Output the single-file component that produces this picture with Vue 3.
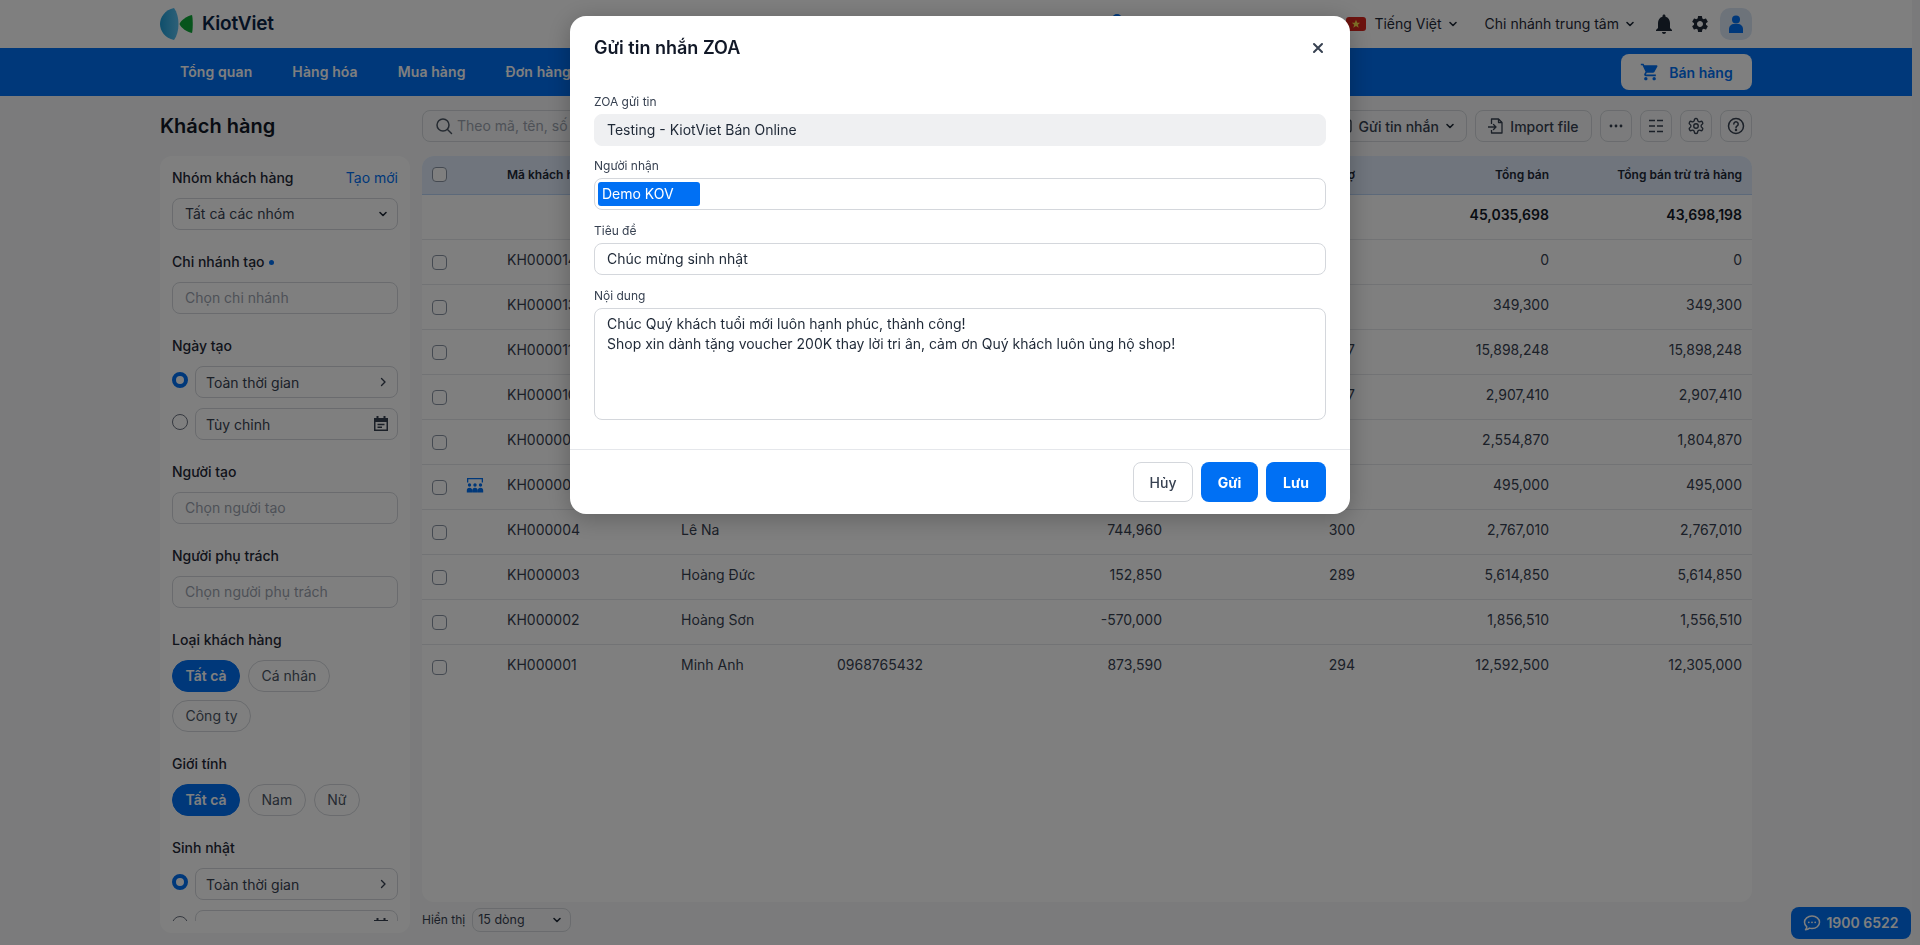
<script setup>
const navItems = ['Tổng quan', 'Hàng hóa', 'Mua hàng', 'Đơn hàng', 'Khách hàng', 'Sổ quỹ', 'Báo cáo', 'Bán online']

const rows = [
  { code: 'KH000014', name: '', phone: '', debt: '', points: '', sales: '0', net: '0' },
  { code: 'KH000013', name: '', phone: '', debt: '', points: '', sales: '349,300', net: '349,300' },
  { code: 'KH000011', name: '', phone: '', debt: '', points: '327', sales: '15,898,248', net: '15,898,248' },
  { code: 'KH000010', name: '', phone: '', debt: '', points: '297', sales: '2,907,410', net: '2,907,410' },
  { code: 'KH000009', name: '', phone: '', debt: '', points: '', sales: '2,554,870', net: '1,804,870' },
  { code: 'KH000005', name: '', phone: '', debt: '', points: '', sales: '495,000', net: '495,000', group: true },
  { code: 'KH000004', name: 'Lê Na', phone: '', debt: '744,960', points: '300', sales: '2,767,010', net: '2,767,010' },
  { code: 'KH000003', name: 'Hoàng Đức', phone: '', debt: '152,850', points: '289', sales: '5,614,850', net: '5,614,850' },
  { code: 'KH000002', name: 'Hoàng Sơn', phone: '', debt: '-570,000', points: '', sales: '1,856,510', net: '1,556,510' },
  { code: 'KH000001', name: 'Minh Anh', phone: '0968765432', debt: '873,590', points: '294', sales: '12,592,500', net: '12,305,000' }
]
</script>

<template>
  <div class="page">
    <header class="topbar">
      <div class="wrap topbar-in">
        <div class="logo">
          <svg width="33" height="32" viewBox="0 0 33 32">
            <defs>
              <linearGradient id="lg" x1="0" y1="0" x2="1" y2="0">
                <stop offset="0" stop-color="#1f9ed8" />
                <stop offset="1" stop-color="#5cc1f0" />
              </linearGradient>
            </defs>
            <path d="M14 0C5 2 0 9 0 16s5 14 14 16c3-4 4.500-10 4.500-16S17 4 14 0z" fill="url(#lg)" />
            <path d="M32 7c-5 1-11 5-12.500 9C21 20 27 24 32 25c1-3 1-15 0-18z" fill="#0fa838" />
          </svg>
          <span class="logo-text">KiotViet</span>
        </div>
        <i class="top-dot"></i>
        <div class="top-right">
          <span class="flag"><svg width="10" height="10" viewBox="0 0 24 24"><path d="M12 2l3 7h7l-5.600 4.500L18.500 21 12 16.500 5.500 21l2.100-7.500L2 9h7z" fill="#ffe14d" /></svg></span>
          <span class="top-link lang">Tiếng Việt <svg class="chev" viewBox="0 0 12 12"><path d="M3 4.500l3 3 3-3" /></svg></span>
          <span class="top-link branch">Chi nhánh trung tâm <svg class="chev" viewBox="0 0 12 12"><path d="M3 4.500l3 3 3-3" /></svg></span>
          <svg class="bell" width="24" height="24" viewBox="0 0 24 24"><path d="M12 22c1.100 0 2-.9 2-2h-4c0 1.100.9 2 2 2zm6-6v-5c0-3.070-1.630-5.640-4.500-6.320V4c0-.83-.67-1.500-1.500-1.500s-1.500.67-1.500 1.500v.68C7.640 5.360 6 7.920 6 11v5l-2 2v1h16v-1l-2-2z" /></svg>
          <svg class="gear" width="20" height="20" viewBox="0 0 24 24"><path d="M19.140 12.940c.04-.3.06-.61.06-.94 0-.32-.02-.64-.07-.94l2.030-1.580a.49.49 0 0 0 .12-.61l-1.920-3.320a.488.488 0 0 0-.59-.22l-2.390.96c-.5-.38-1.030-.7-1.620-.94l-.36-2.540a.484.484 0 0 0-.48-.41h-3.840c-.24 0-.43.17-.47.41l-.36 2.540c-.59.24-1.130.57-1.620.94l-2.390-.96c-.22-.08-.47 0-.59.22L2.740 8.870c-.12.21-.08.47.12.61l2.030 1.580c-.05.3-.09.63-.09.94s.02.64.07.94l-2.030 1.580a.49.49 0 0 0-.12.61l1.920 3.320c.12.22.37.29.59.22l2.390-.96c.5.38 1.030.7 1.620.94l.36 2.540c.05.24.24.41.48.41h3.840c.24 0 .44-.17.47-.41l.36-2.540c.59-.24 1.130-.56 1.620-.94l2.390.96c.22.08.47 0 .59-.22l1.920-3.320c.12-.22.07-.47-.12-.61l-2.010-1.580zM12 15.600c-1.980 0-3.600-1.620-3.600-3.600s1.620-3.600 3.600-3.600 3.600 1.620 3.600 3.600-1.620 3.600-3.600 3.600z" /></svg>
          <span class="avatar"><svg width="20" height="20" viewBox="0 0 20 20"><circle cx="10" cy="5.500" r="4" /><path d="M3 19v-4c0-3 2.500-5 5-5h4c2.500 0 5 2 5 5v4z" /></svg></span>
        </div>
      </div>
    </header>

    <nav class="navbar">
      <div class="wrap nav-in">
        <a v-for="item in navItems" :key="item" class="nav-item">{{ item }}</a>
        <button class="sell-btn">
          <svg width="20" height="20" viewBox="0 0 24 24"><path d="M7 18c-1.100 0-1.990.9-1.990 2S5.900 22 7 22s2-.9 2-2-.9-2-2-2zM1 2v2h2l3.600 7.590-1.350 2.450c-.16.28-.25.61-.25.96 0 1.100.9 2 2 2h12v-2H7.420c-.14 0-.25-.11-.25-.25l.03-.12.9-1.630h7.450c.75 0 1.410-.41 1.750-1.030l3.580-6.490c.08-.14.12-.31.12-.48 0-.55-.45-1-1-1H5.210l-.94-2H1zm16 16c-1.100 0-1.990.9-1.990 2s.89 2 1.990 2 2-.9 2-2-.9-2-2-2z" /></svg>
          Bán hàng
        </button>
      </div>
    </nav>

    <main class="wrap content">
      <h1 class="title">Khách hàng</h1>

      <div class="toolbar">
        <div class="search">
          <svg width="18" height="18" viewBox="0 0 18 18" fill="none" stroke="#4b5563" stroke-width="1.500"><circle cx="8" cy="8" r="6" /><path d="M12.500 12.500L16.500 16.500" stroke-linecap="round" /></svg>
          <span>Theo mã, tên, số</span>
        </div>
        <button class="tool-btn send">
          <svg width="16" height="16" viewBox="0 0 16 16" fill="none" stroke="#374151" stroke-width="1.300"><rect x="2" y="2" width="12" height="12" rx="2" /></svg>
          Gửi tin nhắn
          <svg class="chev" viewBox="0 0 12 12"><path d="M3 4.500l3 3 3-3" /></svg>
        </button>
        <button class="tool-btn">
          <svg width="16" height="18" viewBox="1 0 16 18" fill="none" stroke="#374151" stroke-width="1.300" stroke-linejoin="round"><path d="M4.500 7V2h7l3.500 3.500V16H4.500v-3" /><path d="M11.500 2v3.500H15" /><path d="M1 10h8M6.500 7.500L9 10l-2.500 2.500" stroke-linecap="round" /></svg>
          Import file
        </button>
        <button class="icon-btn">
          <svg width="16" height="16" viewBox="0 0 16 16" fill="#374151"><circle cx="3" cy="8" r="1.400" /><circle cx="8" cy="8" r="1.400" /><circle cx="13" cy="8" r="1.400" /></svg>
        </button>
        <button class="icon-btn">
          <svg width="16" height="16" viewBox="0 0 16 16" fill="none" stroke="#374151" stroke-width="1.500"><path d="M1 2.500h6M9 2.500h6M1 8h6M9 8h6M1 13.500h6M9 13.500h6" /></svg>
        </button>
        <button class="icon-btn">
          <svg width="18" height="18" viewBox="0 0 24 24" fill="none" stroke="#374151" stroke-width="1.800" stroke-linejoin="round"><path d="M12.220 2h-.44a2 2 0 0 0-2 2v.18a2 2 0 0 1-1 1.730l-.43.25a2 2 0 0 1-2 0l-.15-.08a2 2 0 0 0-2.730.73l-.22.38a2 2 0 0 0 .73 2.730l.15.1a2 2 0 0 1 1 1.720v.51a2 2 0 0 1-1 1.740l-.15.09a2 2 0 0 0-.73 2.730l.22.38a2 2 0 0 0 2.730.73l.15-.08a2 2 0 0 1 2 0l.43.25a2 2 0 0 1 1 1.730V20a2 2 0 0 0 2 2h.44a2 2 0 0 0 2-2v-.18a2 2 0 0 1 1-1.730l.43-.25a2 2 0 0 1 2 0l.15.08a2 2 0 0 0 2.730-.73l.22-.39a2 2 0 0 0-.73-2.730l-.15-.08a2 2 0 0 1-1-1.740v-.5a2 2 0 0 1 1-1.740l.15-.09a2 2 0 0 0 .73-2.730l-.22-.38a2 2 0 0 0-2.730-.73l-.15.08a2 2 0 0 1-2 0l-.43-.25a2 2 0 0 1-1-1.730V4a2 2 0 0 0-2-2z" /><circle cx="12" cy="12" r="3" /></svg>
        </button>
        <button class="icon-btn">
          <svg width="18" height="18" viewBox="0 0 18 18" fill="none" stroke="#374151" stroke-width="1.500"><circle cx="9" cy="9" r="7.500" /><path d="M6.800 7a2.200 2.200 0 1 1 3.400 1.900c-.8.5-1.200 1-1.200 1.900" stroke-linecap="round" /><circle cx="9" cy="13" r=".5" fill="#374151" /></svg>
        </button>
      </div>

      <aside class="side">
        <div class="side-scroll">
          <section class="group">
            <div class="label-row"><span class="label">Nhóm khách hàng</span><a class="new-link">Tạo mới</a></div>
            <div class="control select">Tất cả các nhóm <svg class="chev" viewBox="0 0 12 12"><path d="M3 4.500l3 3 3-3" /></svg></div>
          </section>
          <section class="group">
            <div class="label">Chi nhánh tạo<i class="dot"></i></div>
            <div class="control ph">Chọn chi nhánh</div>
          </section>
          <section class="group">
            <div class="label">Ngày tạo</div>
            <div class="radio-row">
              <i class="radio on"></i>
              <div class="control small">Toàn thời gian <svg class="arrow" viewBox="0 0 12 12"><path d="M4.500 2.500L8 6l-3.500 3.500" /></svg></div>
            </div>
            <div class="radio-row">
              <i class="radio"></i>
              <div class="control small">Tùy chỉnh <svg class="cal" width="16" height="16" viewBox="0 0 16 16"><path d="M3.500 0h2v2h5V0h2v2H15v4H1V2h2.500z" fill="#374151" /><path d="M1.750 5v9.250h12.500V5M4.500 8.500h7M4.500 11.200h4.500" fill="none" stroke="#374151" stroke-width="1.500" /></svg></div>
            </div>
          </section>
          <section class="group">
            <div class="label">Người tạo</div>
            <div class="control ph">Chọn người tạo</div>
          </section>
          <section class="group">
            <div class="label">Người phụ trách</div>
            <div class="control ph">Chọn người phụ trách</div>
          </section>
          <section class="group">
            <div class="label">Loại khách hàng</div>
            <div class="pills">
              <span class="pill active">Tất cả</span>
              <span class="pill">Cá nhân</span>
              <span class="pill">Công ty</span>
            </div>
          </section>
          <section class="group">
            <div class="label">Giới tính</div>
            <div class="pills">
              <span class="pill active">Tất cả</span>
              <span class="pill">Nam</span>
              <span class="pill">Nữ</span>
            </div>
          </section>
          <section class="group">
            <div class="label">Sinh nhật</div>
            <div class="radio-row">
              <i class="radio on"></i>
              <div class="control small">Toàn thời gian <svg class="arrow" viewBox="0 0 12 12"><path d="M4.500 2.500L8 6l-3.500 3.500" /></svg></div>
            </div>
            <div class="radio-row">
              <i class="radio"></i>
              <div class="control small">Tùy chỉnh <svg class="cal" width="16" height="16" viewBox="0 0 16 16"><path d="M3.500 0h2v2h5V0h2v2H15v4H1V2h2.500z" fill="#374151" /><path d="M1.750 5v9.250h12.500V5M4.500 8.500h7M4.500 11.200h4.500" fill="none" stroke="#374151" stroke-width="1.500" /></svg></div>
            </div>
          </section>
        </div>
      </aside>

      <div class="table-col">
        <div class="table">
          <div class="row head">
            <i class="check"></i>
            <span></span>
            <span>Mã khách hàng</span>
            <span>Tên khách hàng</span>
            <span>Điện thoại</span>
            <span class="num">Nợ hiện tại</span>
            <span class="num">Tổng nợ</span>
            <span class="num">Tổng bán</span>
            <span class="num">Tổng bán trừ trả hàng</span>
          </div>
          <div class="row total">
            <span></span><span></span><span></span><span></span><span></span><span></span><span></span>
            <span class="num">45,035,698</span>
            <span class="num">43,698,198</span>
          </div>
          <div v-for="r in rows" :key="r.code" class="row">
            <i class="check"></i>
            <span class="cell-icon">
              <svg v-if="r.group" width="18" height="15" viewBox="0 0 18 15" fill="#0070f4"><path d="M1 0h16v4.500h-1.300V1.300H2.300v3.200H1z" /><circle cx="3.500" cy="7" r="1.700" /><circle cx="9" cy="7" r="1.700" /><circle cx="14.500" cy="7" r="1.700" /><path d="M.8 14.500v-2c0-1.600 1-2.700 2.700-2.700s2.700 1.100 2.700 2.700v2zM6.300 14.500v-2c0-1.600 1-2.700 2.700-2.700s2.700 1.100 2.700 2.700v2zM11.800 14.500v-2c0-1.600 1-2.700 2.700-2.700s2.700 1.100 2.700 2.700v2z" /></svg>
            </span>
            <span>{{ r.code }}</span>
            <span>{{ r.name }}</span>
            <span>{{ r.phone }}</span>
            <span class="num">{{ r.debt }}</span>
            <span class="num">{{ r.points }}</span>
            <span class="num">{{ r.sales }}</span>
            <span class="num">{{ r.net }}</span>
          </div>
        </div>
        <div class="pager">
          <span>Hiển thị</span>
          <div class="pager-select">15 dòng <svg class="chev" viewBox="0 0 12 12"><path d="M3 4.500l3 3 3-3" /></svg></div>
        </div>
      </div>
    </main>

    <a class="hotline">
      <svg width="18" height="18" viewBox="0 0 18 18" fill="none" stroke="#fff" stroke-width="1.500"><path d="M9 2c4.200 0 7.500 2.700 7.500 6.300S13.200 14.500 9 14.500c-.9 0-1.700-.1-2.500-.4-1 .9-2.400 1.600-4 1.700.8-.8 1.200-1.800 1.300-2.900C2.400 11.800 1.500 10.200 1.500 8.300 1.500 4.700 4.800 2 9 2z" stroke-linejoin="round" /><circle cx="5.800" cy="8.300" r=".9" fill="#fff" stroke="none" /><circle cx="9" cy="8.300" r=".9" fill="#fff" stroke="none" /><circle cx="12.200" cy="8.300" r=".9" fill="#fff" stroke="none" /></svg>
      1900 6522
    </a>

    <div class="overlay">
      <div class="modal">
        <div class="modal-head">
          <h2>Gửi tin nhắn ZOA</h2>
          <svg width="12" height="12" viewBox="0 0 12 12" fill="none" stroke="#374151" stroke-width="2" stroke-linecap="round"><path d="M2 2l8 8M10 2l-8 8" /></svg>
        </div>
        <div class="modal-body">
          <div class="field">
            <label>ZOA gửi tin</label>
            <div class="box readonly">Testing - KiotViet Bán Online</div>
          </div>
          <div class="field">
            <label>Người nhận</label>
            <div class="box tags"><span class="tag">Demo KOV</span></div>
          </div>
          <div class="field">
            <label>Tiêu đề</label>
            <div class="box">Chúc mừng sinh nhật</div>
          </div>
          <div class="field">
            <label>Nội dung</label>
            <div class="box area">Chúc Quý khách tuổi mới luôn hạnh phúc, thành công!<br />Shop xin dành tặng voucher 200K thay lời tri ân, cảm ơn Quý khách luôn ủng hộ shop!</div>
          </div>
        </div>
        <div class="modal-foot">
          <button class="btn cancel">Hủy</button>
          <button class="btn primary send-btn">Gửi</button>
          <button class="btn primary">Lưu</button>
        </div>
      </div>
    </div>
  </div>
</template>

<style scoped>
.page {
  position: relative;
  width: 1912px;
  height: 945px;
  overflow: hidden;
  background: #f6f7f8;
  font-family: Inter, "Noto Sans", sans-serif;
  font-size: 14px;
  line-height: 20px;
  color: #1f2937;
}

.wrap {
  width: 1592px;
  margin: 0 auto;
}

button {
  font-family: inherit;
}

/* top bar */
.topbar {
  height: 48px;
  background: #fff;
}
.topbar-in {
  position: relative;
  height: 48px;
  display: flex;
  align-items: center;
  justify-content: space-between;
}
.logo {
  display: flex;
  align-items: center;
  gap: 9px;
}
.logo-text {
  font-size: 19px;
  font-weight: 600;
  color: #0b2447;
  letter-spacing: -0.2px;
}
.top-dot {
  position: absolute;
  left: 952px;
  top: 14px;
  width: 10px;
  height: 10px;
  border-radius: 50%;
  background: #0070f4;
}
.top-right {
  display: flex;
  align-items: center;
}
.flag {
  width: 20px;
  height: 14px;
  border-radius: 3px;
  background: #da251d;
  display: flex;
  align-items: center;
  justify-content: center;
  margin-right: 8px;
}
.top-link {
  display: flex;
  align-items: center;
  gap: 5px;
  color: #1f2937;
}
.lang {
  margin-right: 26px;
}
.branch {
  margin-right: 16px;
}
.chev {
  width: 12px;
  height: 12px;
  fill: none;
  stroke: #1f2937;
  stroke-width: 1.600;
  stroke-linecap: round;
  stroke-linejoin: round;
  flex: none;
}
.bell {
  fill: #1f2937;
  margin-right: 14px;
}
.gear {
  fill: #1f2937;
  margin-right: 10px;
}
.avatar {
  width: 32px;
  height: 32px;
  border-radius: 10px;
  background: #dbe6f5;
  display: flex;
  align-items: center;
  justify-content: center;
  fill: #0070f4;
}

/* nav */
.navbar {
  height: 48px;
  background: #0070f4;
}
.nav-in {
  height: 48px;
  display: flex;
  align-items: center;
}
.nav-item {
  padding: 0 20px;
  color: #fff;
  font-weight: 600;
  letter-spacing: 0.1px;
  white-space: nowrap;
}
.sell-btn {
  margin-left: auto;
  width: 131px;
  height: 36px;
  border: 0;
  border-radius: 8px;
  background: #fff;
  color: #0070f4;
  font-size: 14px;
  font-weight: 600;
  display: flex;
  align-items: center;
  justify-content: center;
  gap: 9px;
  fill: #0070f4;
}

/* main grid */
.content {
  display: grid;
  grid-template-columns: 250px 1fr;
  grid-template-rows: 32px 777px;
  column-gap: 12px;
  row-gap: 14px;
  padding-top: 14px;
}
.title {
  margin: 0;
  font-size: 20px;
  line-height: 32px;
  font-weight: 600;
  color: #111827;
}
.toolbar {
  display: flex;
  gap: 8px;
  height: 32px;
}
.search {
  flex: 1;
  display: flex;
  align-items: center;
  gap: 4px;
  padding-left: 12px;
  border: 1px solid #d4d7dc;
  border-radius: 8px;
  color: #9ca3af;
}
.tool-btn {
  height: 32px;
  padding: 0 12.500px;
  border: 1px solid #d4d7dc;
  border-radius: 8px;
  background: transparent;
  display: flex;
  align-items: center;
  gap: 6px;
  font-size: 14px;
  font-weight: 500;
  color: #374151;
}
.tool-btn.send {
  padding-right: 10px;
}
.tool-btn.send .chev {
  margin-left: -1px;
}
.icon-btn {
  width: 32px;
  height: 32px;
  padding: 0;
  border: 1px solid #d4d7dc;
  border-radius: 8px;
  background: transparent;
  display: flex;
  align-items: center;
  justify-content: center;
}

/* sidebar */
.side {
  background: #fff;
  border-radius: 12px;
  padding: 12px;
}
.side-scroll {
  height: 753px;
  overflow: hidden;
}
.group {
  margin-bottom: 22px;
}
.label-row {
  display: flex;
  justify-content: space-between;
  margin-bottom: 10px;
}
.label {
  font-weight: 500;
  color: #1f2937;
  display: block;
}
.group > .label {
  margin-bottom: 10px;
}
.new-link {
  color: #0070f4;
}
.dot {
  display: inline-block;
  width: 5px;
  height: 5px;
  border-radius: 50%;
  background: #0070f4;
  margin-left: 4px;
  vertical-align: 2px;
}
.control {
  height: 32px;
  box-sizing: border-box;
  border: 1px solid #d4d7dc;
  border-radius: 8px;
  padding: 0 12px;
  display: flex;
  align-items: center;
  justify-content: space-between;
  color: #374151;
}
.control.select {
  padding-right: 8px;
}
.control.ph {
  color: #9ca3af;
}
.control.small {
  flex: 1;
  padding: 2px 8px 0 10px;
}
.radio-row {
  display: flex;
  gap: 7px;
  margin-bottom: 10px;
}
.radio {
  width: 16px;
  height: 16px;
  box-sizing: border-box;
  margin-top: 6px;
  border: 1px solid #6b7280;
  border-radius: 50%;
  flex: none;
}
.radio.on {
  border: 4px solid #0070f4;
  background: #fff;
}
.arrow {
  width: 12px;
  height: 12px;
  margin-top: -2px;
  fill: none;
  stroke: #374151;
  stroke-width: 1.400;
  stroke-linecap: round;
  stroke-linejoin: round;
}
.cal {
  margin-top: -2px;
}
.pills {
  display: flex;
  flex-wrap: wrap;
  gap: 8px;
}
.pill {
  height: 32px;
  box-sizing: border-box;
  padding: 0 12.500px;
  border: 1px solid #d4d7dc;
  border-radius: 16px;
  display: flex;
  align-items: center;
  color: #4b5563;
}
.pill.active {
  background: #0070f4;
  border-color: #0070f4;
  color: #fff;
  font-weight: 600;
}

/* table */
.table {
  height: 746px;
  background: #fff;
  border-radius: 12px;
  overflow: hidden;
}
.row {
  display: grid;
  grid-template-columns: 44px 41px 174px 156px 200px 125px 193px 194px 193px;
  box-sizing: border-box;
  height: 45px;
  padding: 10px 10px 0 0;
  border-bottom: 1px solid #e5e7eb;
  color: #374151;
}
.row:last-child {
  border-bottom: 0;
}
.row.head {
  height: 39px;
  padding-top: 9px;
  background: #e0ebfb;
  border-bottom: 1px solid #b9d3f5;
  font-size: 12px;
  font-weight: 600;
  color: #1f2937;
}
.row.total {
  font-weight: 600;
  color: #111827;
}
.num {
  text-align: right;
  white-space: nowrap;
}
.check {
  display: block;
  width: 15px;
  height: 15px;
  box-sizing: border-box;
  margin: 5px 0 0 10px;
  border: 1.500px solid #8b95a5;
  border-radius: 4px;
  background: #fff;
}
.row.head .check {
  margin-top: 2px;
}
.cell-icon {
  display: block;
  padding-top: 3px;
}
.pager {
  display: flex;
  align-items: center;
  gap: 7px;
  height: 24px;
  margin-top: 6px;
  font-size: 12px;
  color: #374151;
}
.pager-select {
  width: 99px;
  height: 24px;
  box-sizing: border-box;
  border: 1px solid #d4d7dc;
  border-radius: 8px;
  padding: 0 7px 0 5px;
  display: flex;
  align-items: center;
  justify-content: space-between;
  font-size: 12.500px;
}

.hotline {
  position: absolute;
  right: 1px;
  bottom: 6px;
  width: 120px;
  height: 32px;
  border-radius: 8px;
  background: #0070f4;
  color: #fff;
  font-weight: 600;
  display: flex;
  align-items: center;
  justify-content: center;
  gap: 5px;
}

/* modal */
.overlay {
  position: fixed;
  inset: 0;
  background: rgba(0, 0, 0, 0.5);
}
.modal {
  width: 780px;
  height: 498px;
  margin: 16px auto 0;
  background: #fff;
  border-radius: 16px;
  box-shadow: 0 4px 24px rgba(0, 0, 0, 0.25);
  display: flex;
  flex-direction: column;
  color: #1f2937;
}
.modal-head {
  display: flex;
  align-items: center;
  justify-content: space-between;
  padding: 20px 26px 20px 24px;
}
.modal-head h2 {
  margin: 0;
  font-size: 18px;
  line-height: 24px;
  font-weight: 600;
  color: #111827;
}
.modal-body {
  flex: 1;
  padding: 14px 24px 0;
}
.field {
  margin-bottom: 12px;
}
.field + .field {
  margin-bottom: 13px;
}
.field label {
  display: block;
  font-size: 12px;
  line-height: 16px;
  margin-bottom: 4px;
  color: #374151;
}
.box {
  height: 32px;
  box-sizing: border-box;
  border: 1px solid #d4d7dc;
  border-radius: 8px;
  padding: 0 12px;
  display: flex;
  align-items: center;
}
.box.readonly {
  background: #eff0f2;
  border-color: #eff0f2;
}
.box.tags {
  padding: 0 3px;
}
.tag {
  width: 102px;
  height: 24px;
  box-sizing: border-box;
  padding-left: 4px;
  border-radius: 3px;
  background: #0070f4;
  color: #fff;
  line-height: 24px;
}
.box.area {
  height: 112px;
  display: block;
  padding: 5px 12px;
}
.modal-foot {
  display: flex;
  justify-content: flex-end;
  gap: 8px;
  padding: 12px 24px;
  border-top: 1px solid #e5e7eb;
}
.btn {
  height: 40px;
  border-radius: 8px;
  font-size: 14px;
  font-weight: 700;
  border: 0;
}
.btn.cancel {
  width: 60px;
  background: #fff;
  border: 1px solid #d4d7dc;
  color: #374151;
  font-weight: 500;
}
.btn.primary {
  width: 60px;
  background: #0070f4;
  color: #fff;
}
.btn.send-btn {
  width: 57px;
}
</style>

<style>
html {
  background: #f4f5f6;
}
body {
  overflow: hidden;
}
</style>
